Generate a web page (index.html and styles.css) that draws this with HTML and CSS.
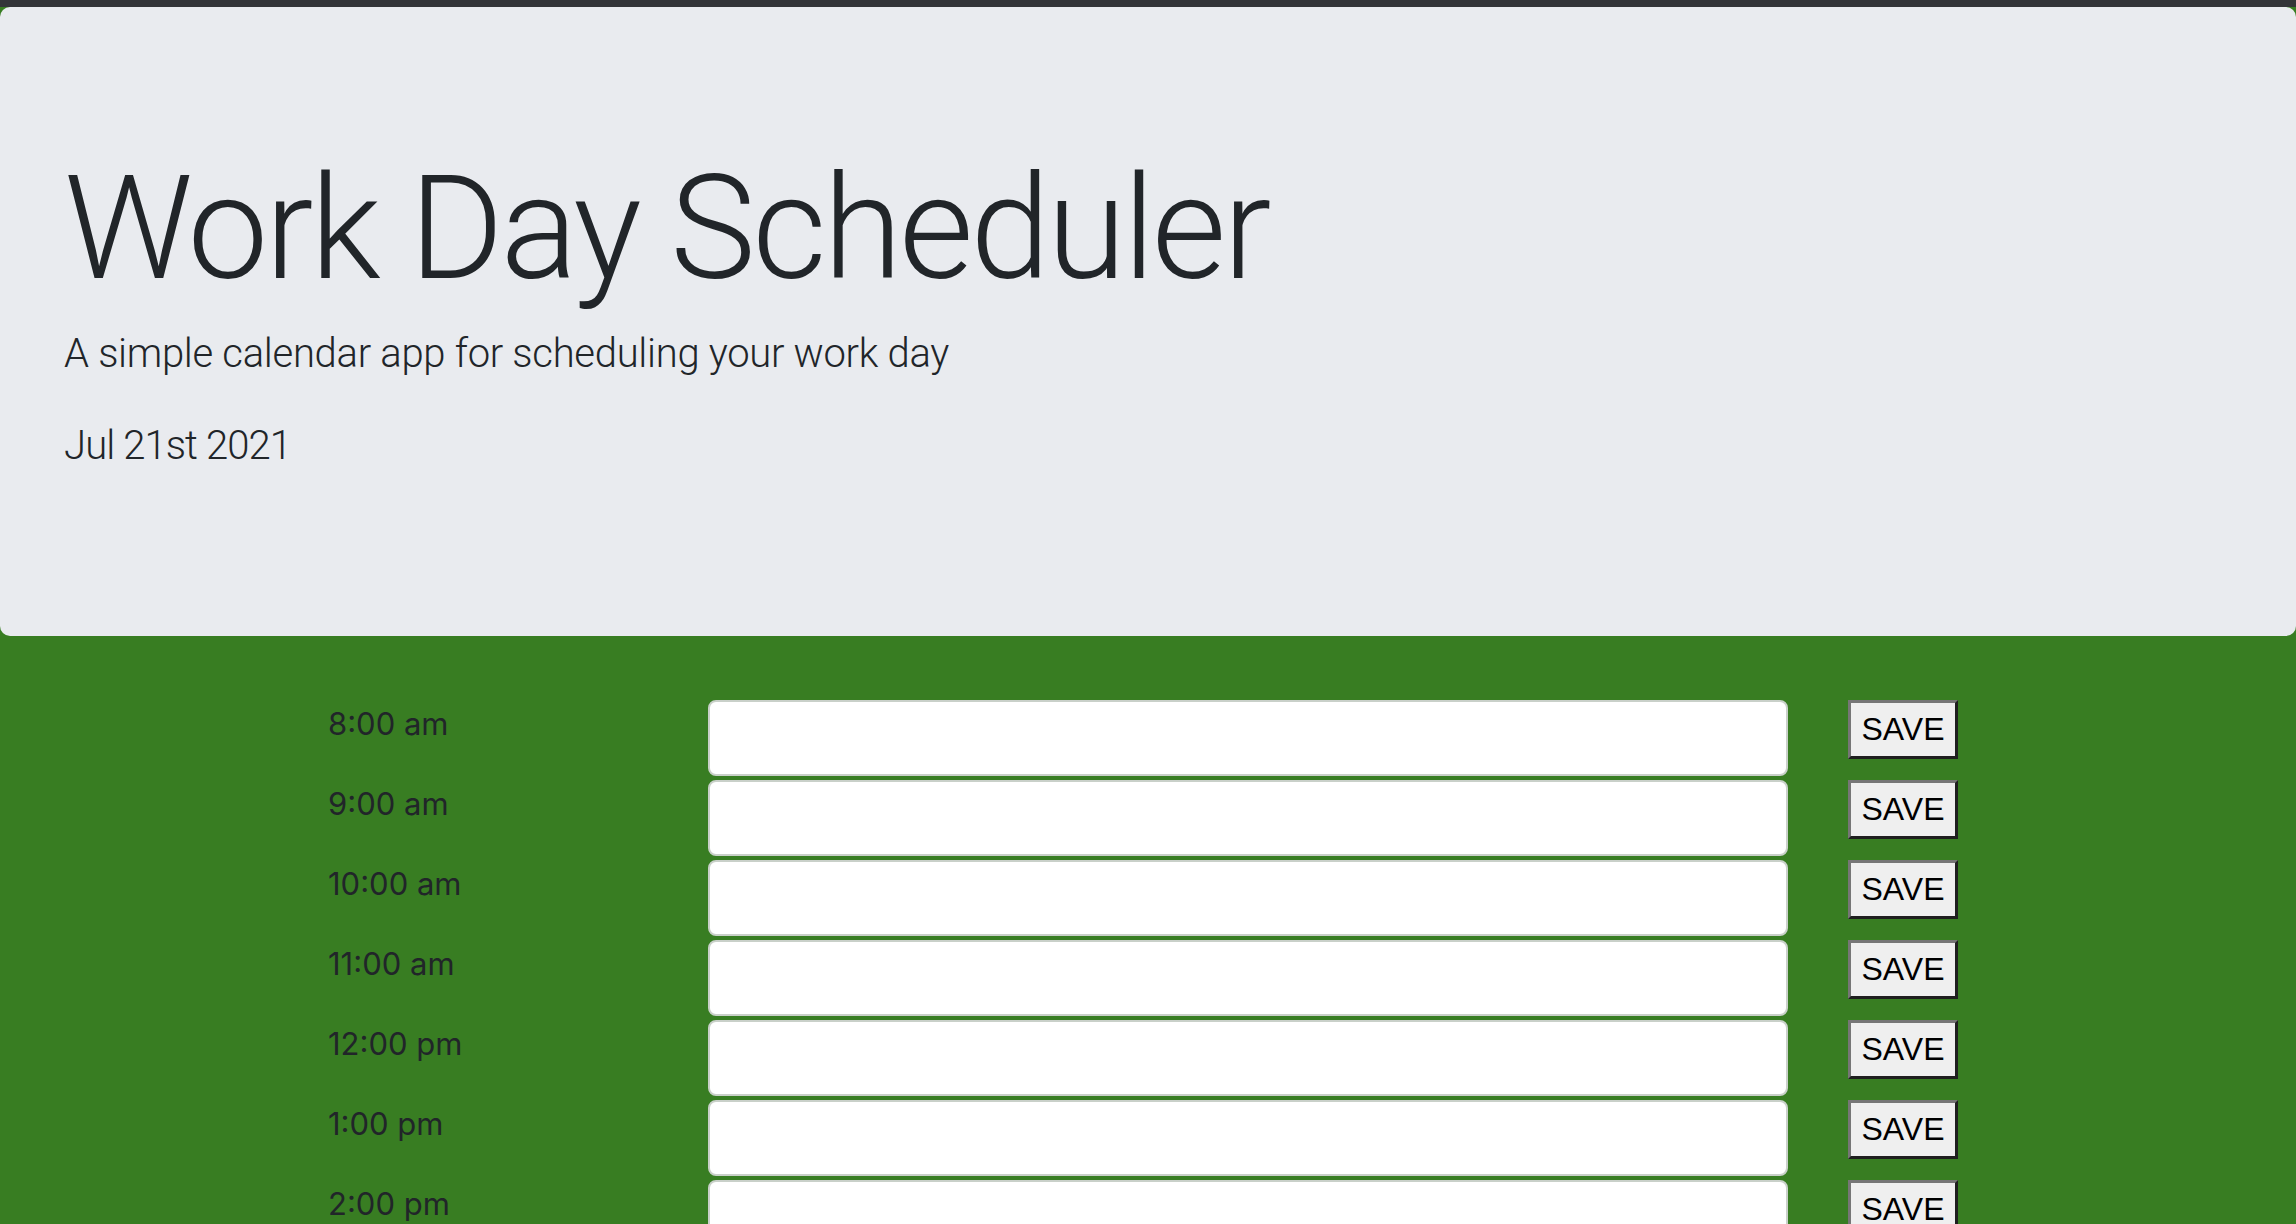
FILE: index.html
```html
<!DOCTYPE html>
<html lang="en">
<head>
<meta charset="utf-8">
<title>Work Day Scheduler</title>
<link rel="stylesheet" href="styles.css">
</head>
<body>
<div class="topbar"></div>
<header class="jumbotron">
  <h1 class="title">Work Day Scheduler</h1>
  <p class="lead">A simple calendar app for scheduling your work day</p>
  <p class="lead date">Jul 21st 2021</p>
</header>
<main class="schedule">
  <div class="row"><div class="hour">8:00 am</div><textarea class="desc"></textarea><button class="save">SAVE</button></div>
  <div class="row"><div class="hour">9:00 am</div><textarea class="desc"></textarea><button class="save">SAVE</button></div>
  <div class="row"><div class="hour">10:00 am</div><textarea class="desc"></textarea><button class="save">SAVE</button></div>
  <div class="row"><div class="hour">11:00 am</div><textarea class="desc"></textarea><button class="save">SAVE</button></div>
  <div class="row"><div class="hour">12:00 pm</div><textarea class="desc"></textarea><button class="save">SAVE</button></div>
  <div class="row"><div class="hour">1:00 pm</div><textarea class="desc"></textarea><button class="save">SAVE</button></div>
  <div class="row"><div class="hour">2:00 pm</div><textarea class="desc"></textarea><button class="save">SAVE</button></div>
  <div class="row"><div class="hour">3:00 pm</div><textarea class="desc"></textarea><button class="save">SAVE</button></div>
  <div class="row"><div class="hour">4:00 pm</div><textarea class="desc"></textarea><button class="save">SAVE</button></div>
  <div class="row"><div class="hour">5:00 pm</div><textarea class="desc"></textarea><button class="save">SAVE</button></div>
</main>
</body>
</html>
```
FILE: styles.css
```css
html, body {
  margin: 0;
  padding: 0;
}
body {
  background: #387d22;
  font-family: Roboto, "Noto Sans", sans-serif;
  color: #212529;
}
.topbar {
  height: 7px;
  background: #333438;
}
.jumbotron {
  background: #e9ebef;
  border-radius: 10px;
  padding: 128px 64px;
  margin-bottom: 64px;
}
.title {
  font-size: 144px;
  font-weight: 300;
  line-height: 1.2;
  margin: 0 0 8px;
  padding-top: 8px;
  letter-spacing: -3.3px;
}
.lead {
  font-size: 40px;
  font-weight: 300;
  line-height: 1.5;
  margin: 0 0 32px;
  letter-spacing: -0.3px;
}
.lead.date {
  letter-spacing: -0.9px;
}
.schedule {
  padding-left: 328px;
}
.row {
  display: grid;
  grid-template-columns: 380px 1080px 60px 110px;
  height: 80px;
  align-items: start;
}
.hour {
  font-family: Inter, Roboto, sans-serif;
  font-size: 31px;
  line-height: 48px;
}
.desc {
  box-sizing: border-box;
  height: 76px;
  width: 1080px;
  margin: 0;
  border: 2px solid #c9d0c9;
  border-radius: 8px;
  background: #fff;
  resize: none;
}
.save {
  grid-column: 4;
  box-sizing: border-box;
  width: 110px;
  height: 59px;
  margin: 0;
  padding: 0;
  font-family: "Liberation Sans", Arial, sans-serif;
  font-size: 32px;
  color: #000;
  background: #efefef;
  border: 3px solid;
  border-color: #767676 #1f1f1f #1f1f1f #767676;
}
```
